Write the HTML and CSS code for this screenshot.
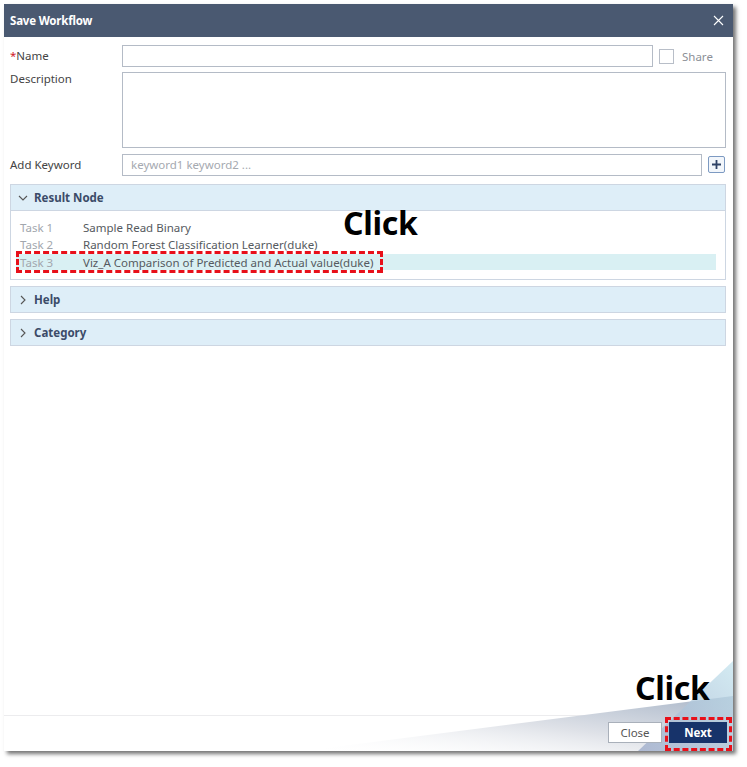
FILE: index.html
```html
<!DOCTYPE html>
<html>
<head>
<meta charset="utf-8">
<link rel="stylesheet" href="styles.css">
</head>
<body>
<div class="dialog">
  <div class="header">
    <span class="title">Save Workflow</span>
    <svg class="close-x" width="11" height="11" viewBox="0 0 11 11"><path d="M1 1L10 10M10 1L1 10" stroke="#fff" stroke-width="1.1"/></svg>
  </div>
  <div class="content">
    <div class="row row-name">
      <label class="lbl"><span class="req">*</span>Name</label>
      <div class="input"></div>
      <div class="share"><span class="check"></span><span class="share-txt">Share</span></div>
    </div>
    <div class="row row-desc">
      <label class="lbl">Description</label>
      <div class="textarea"></div>
    </div>
    <div class="row row-kw">
      <label class="lbl">Add Keyword</label>
      <div class="input placeholder">keyword1 keyword2 ...</div>
      <div class="plus"><svg width="11" height="11" viewBox="0 0 11 11"><path d="M5.5 1V10M1 5.5H10" stroke="#2e4266" stroke-width="1.8"/></svg></div>
    </div>

    <div class="panel open">
      <div class="panel-head"><svg class="chev" width="10" height="10" viewBox="0 0 10 10"><path d="M1 3L5 7L9 3" fill="none" stroke="#555" stroke-width="1.1"/></svg>Result Node</div>
      <div class="panel-body">
        <div class="task"><span class="tl">Task 1</span><span class="tn">Sample Read Binary</span></div>
        <div class="task"><span class="tl">Task 2</span><span class="tn">Random Forest Classification Learner(duke)</span></div>
        <div class="task sel"><span class="tl">Task 3</span><span class="tn">Viz_A Comparison of Predicted and Actual value(duke)</span></div>
      </div>
    </div>
    <div class="panel">
      <div class="panel-head"><svg class="chev" width="10" height="10" viewBox="0 0 10 10"><path d="M3 1L7 5L3 9" fill="none" stroke="#555" stroke-width="1.1"/></svg>Help</div>
    </div>
    <div class="panel">
      <div class="panel-head"><svg class="chev" width="10" height="10" viewBox="0 0 10 10"><path d="M3 1L7 5L3 9" fill="none" stroke="#555" stroke-width="1.1"/></svg>Category</div>
    </div>
  </div>
  <div class="footer">
    <button class="btn btn-close">Close</button>
    <button class="btn btn-next">Next</button>
  </div>
  <svg class="deco" width="440" height="92" viewBox="0 0 440 92">
    <defs>
      <linearGradient id="g1" x1="0" y1="1" x2="1" y2="0">
        <stop offset="0" stop-color="#ffffff" stop-opacity="0"/>
        <stop offset="0.5" stop-color="#dfe2e8"/>
        <stop offset="1" stop-color="#a9b6c8"/>
      </linearGradient>
      <linearGradient id="g2" x1="1" y1="0" x2="0" y2="1">
        <stop offset="0" stop-color="#c4e4ee"/>
        <stop offset="1" stop-color="#9aa8c8"/>
      </linearGradient>
    </defs>
    <polygon points="10,92 440,37 440,92" fill="url(#g1)"/>
    <polygon points="440,2 440,92 345,92" fill="url(#g2)" opacity="0.75"/>
  </svg>
  <div class="mark mark-task"></div>
  <div class="mark mark-next"></div>
  <div class="click click-1">Click</div>
  <div class="click click-2">Click</div>
</div>
</body>
</html>
```

FILE: styles.css
```css
* { box-sizing: border-box; }
html, body { margin: 0; padding: 0; background: #ffffff; }
body {
  font-family: "Noto Sans", "Liberation Sans", sans-serif;
  font-size: 11px;
  color: #444;
  width: 747px;
  height: 767px;
  overflow: hidden;
}
.dialog {
  position: relative;
  margin: 4px 0 0 4px;
  width: 729px;
  height: 747px;
  background: #fff;
  box-shadow: 3px 3px 4px rgba(0,0,0,0.55);
  display: flex;
  flex-direction: column;
}
.header {
  height: 33px;
  background: #4a5971;
  display: flex;
  align-items: center;
  justify-content: space-between;
  padding: 0 9px 0 6px;
}
.title {
  color: #fff;
  font-weight: 700;
  font-size: 11.5px;
  letter-spacing: -0.2px;
}
.close-x { display: block; }
.content {
  flex: 1;
  padding: 8px 7px 0 6px;
  display: flex;
  flex-direction: column;
}
.row {
  display: grid;
  grid-template-columns: 112px 1fr auto;
  align-items: start;
}
.lbl {
  color: #444;
  font-size: 11.5px;
  line-height: 22px;
}
.req { color: #d0202a; }
.input {
  height: 22px;
  border: 1px solid #b4bbc6;
  background: #fff;
}
.placeholder {
  color: #a5a9b0;
  font-size: 11.5px;
  line-height: 20px;
  padding-left: 8px;
}
.share {
  width: 73px;
  height: 22px;
  display: flex;
  align-items: center;
  padding-left: 6px;
  gap: 8px;
}
.check {
  width: 15px;
  height: 15px;
  border: 1px solid #b8bec8;
  background: #fff;
}
.share-txt { color: #8c9097; font-size: 11.5px; }
.row-desc { margin-top: 5px; grid-template-columns: 112px 1fr; }
.row-desc .lbl { line-height: 14px; }
.textarea {
  height: 76px;
  border: 1px solid #b4bbc6;
}
.row-kw { margin-top: 6px; }
.plus {
  margin-left: 6px;
  margin-top: 2px;
  margin-right: 1px;
  width: 17px;
  height: 17px;
  border: 1px solid #7d9ac2;
  border-radius: 2px;
  background: #f2f6fb;
  display: flex;
  align-items: center;
  justify-content: center;
}
.panel {
  margin-top: 8px;
  border: 1px solid #cdd6e2;
}
.panel + .panel { margin-top: 6px; }
.panel-head {
  height: 25px;
  background: #deeef8;
  display: flex;
  align-items: center;
  padding-left: 7px;
  color: #3b4b68;
  font-weight: 700;
  font-size: 11.5px;
}
.chev { margin-right: 6px; }
.panel-body {
  border-top: 1px solid #cdd6e2;
  padding: 8px 9px 9px 5px;
}
.task {
  height: 17px;
  display: flex;
  align-items: center;
  padding-left: 4px;
  font-size: 11.5px;
}
.tl { width: 63px; color: #a2a6ad; }
.tn { color: #555a60; }
.task.sel { background: #d9f0f3; height: 16px; margin-top: 1px; }
.footer {
  height: 36px;
  border-top: 1px solid #ececee;
  display: flex;
  justify-content: flex-end;
  align-items: center;
  gap: 7px;
  padding: 0 6px 2px 0;
}
.btn {
  height: 21px;
  font-family: "Noto Sans", "Liberation Sans", sans-serif;
  font-size: 11.5px;
  padding: 0;
  position: relative;
  z-index: 2;
}
.btn-close {
  width: 54px;
  background: #fff;
  border: 1px solid #a9b0ba;
  color: #555;
}
.btn-next {
  width: 58px;
  background: #17336a;
  border: 1px solid #17336a;
  color: #fff;
  font-weight: 700;
}
.deco {
  position: absolute;
  right: 0;
  bottom: 0;
  z-index: 1;
  pointer-events: none;
}
.mark {
  position: absolute;
  border: 3px dashed #e8101a;
  z-index: 3;
}
.mark-task { left: 12px; top: 247px; width: 367px; height: 22px; }
.mark-next { left: 661px; top: 713px; width: 67px; height: 34px; }
.click {
  position: absolute;
  font-family: "Noto Sans", "Liberation Sans", sans-serif;
  font-weight: 700;
  font-size: 32px;
  color: #000;
  line-height: 1;
  z-index: 3;
  letter-spacing: -0.3px;
}
.click-1 { left: 339px; top: 203px; }
.click-2 { left: 631px; top: 668px; }
```
